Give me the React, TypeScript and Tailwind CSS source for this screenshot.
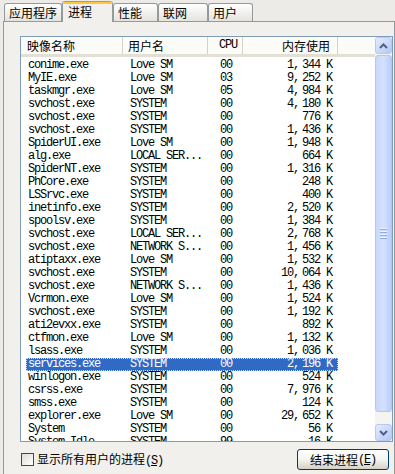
import React from "react";

const ROWS: [string, string, string, string][] = [
  ["conime.exe", "Love SM", "00", "1,344 K"],
  ["MyIE.exe", "Love SM", "03", "9,252 K"],
  ["taskmgr.exe", "Love SM", "05", "4,984 K"],
  ["svchost.exe", "SYSTEM", "00", "4,180 K"],
  ["svchost.exe", "SYSTEM", "00", "776 K"],
  ["svchost.exe", "SYSTEM", "00", "1,436 K"],
  ["SpiderUI.exe", "Love SM", "00", "1,948 K"],
  ["alg.exe", "LOCAL SER...", "00", "664 K"],
  ["SpiderNT.exe", "SYSTEM", "00", "1,316 K"],
  ["PhCore.exe", "SYSTEM", "00", "248 K"],
  ["LSSrvc.exe", "SYSTEM", "00", "400 K"],
  ["inetinfo.exe", "SYSTEM", "00", "2,520 K"],
  ["spoolsv.exe", "SYSTEM", "00", "1,384 K"],
  ["svchost.exe", "LOCAL SER...", "00", "2,768 K"],
  ["svchost.exe", "NETWORK S...", "00", "1,456 K"],
  ["atiptaxx.exe", "Love SM", "00", "1,532 K"],
  ["svchost.exe", "SYSTEM", "00", "10,064 K"],
  ["svchost.exe", "NETWORK S...", "00", "1,436 K"],
  ["Vcrmon.exe", "Love SM", "00", "1,524 K"],
  ["svchost.exe", "SYSTEM", "00", "1,192 K"],
  ["ati2evxx.exe", "SYSTEM", "00", "892 K"],
  ["ctfmon.exe", "Love SM", "00", "1,132 K"],
  ["lsass.exe", "SYSTEM", "00", "1,036 K"],
  ["services.exe", "SYSTEM", "00", "2,196 K"],
  ["winlogon.exe", "SYSTEM", "00", "524 K"],
  ["csrss.exe", "SYSTEM", "00", "7,976 K"],
  ["smss.exe", "SYSTEM", "00", "124 K"],
  ["explorer.exe", "Love SM", "00", "29,652 K"],
  ["System", "SYSTEM", "00", "56 K"],
  ["System Idle...", "SYSTEM", "99", "16 K"],
];

const SELECTED = 23;

// SimSun-like fixed pitch: 6px per latin char
const mono = "font-['Liberation_Mono',monospace] text-[12px] tracking-[-1.2px]";
const cjk = "font-['Noto_Sans_CJK_SC',sans-serif] text-[12px]";

const TABS = [
  { label: "应用程序", w: "w-[58px]" },
  { label: "进程", w: "w-[51px]", active: true },
  { label: "性能", w: "w-[45px]" },
  { label: "联网", w: "w-[50px]" },
  { label: "用户", w: "w-[45px]" },
];

function Mem({ v }: { v: string }) {
  const parts = v.split(",");
  if (parts.length === 1) return <>{v}</>;
  return (
    <>
      {parts[0]}
      <span className="mr-[3px]">,</span>
      {parts[1]}
    </>
  );
}

function Arrow({ up }: { up?: boolean }) {
  return (
    <div className="w-[17px] h-[17px] rounded-[3px] border border-[#b7c9f3] bg-gradient-to-br from-[#e4ecfd] to-[#b5c8f5] flex items-center justify-center">
      <svg width="9" height="6" viewBox="0 0 9 6">
        <polyline
          points={up ? "1,5 4.5,1.5 8,5" : "1,1 4.5,4.5 8,1"}
          fill="none"
          stroke="#4d6185"
          strokeWidth="2"
        />
      </svg>
    </div>
  );
}

export default function App() {
  return (
    <div className="w-[395px] h-[474px] overflow-hidden bg-[#ecebe7] select-none">
      {/* tabs */}
      <div className="flex items-end h-[21px] pl-[4px]">
        {TABS.map((t) =>
          t.active ? (
            <div
              key={t.label}
              className={`${t.w} relative z-10 h-[21px] -mb-px bg-[#f1f0ec] border-x border-[#919b9c] rounded-t-[3px] overflow-hidden`}
            >
              <div className="h-[1px] bg-[#e68b2c]" />
              <div className="h-[2px] bg-[#ffc73c]" />
              <div className={`${cjk} leading-[16px] pl-[5px] text-black`}>{t.label}</div>
            </div>
          ) : (
            <div
              key={t.label}
              className={`${t.w} h-[18px] border-t border-x border-[#919b9c] rounded-t-[3px] bg-gradient-to-b from-[#ffffff] to-[#e4e3de] ${cjk} leading-[17px] pl-[4px] text-black`}
            >
              {t.label}
            </div>
          )
        )}
      </div>

      {/* panel */}
      <div className="ml-[3px] w-[392px] h-[460px] border-t border-x border-[#919b9c] bg-[#f1f0ec] pl-[16px] pt-[14px]">
        {/* list view */}
        <div className="w-[373px] h-[406px] border border-[#7f9db9] bg-white flex">
          <div className="flex-1 flex flex-col overflow-hidden">
            {/* header */}
            <div className="h-[21px] flex border-b-[3px] border-[#e2e0d4] bg-[#fbfbf8] text-black">
              <div className="w-[102px] flex items-center justify-start pl-[6px] border-r border-[#d6d2c2]">
                <span className={`${cjk} leading-[17px]`}>映像名称</span>
              </div>
              <div className="w-[85px] flex items-center pl-[5px] border-r border-[#d6d2c2]">
                <span className={`${cjk} leading-[17px]`}>用户名</span>
              </div>
              <div className="w-[35px] flex items-center pl-[11px] border-r border-[#d6d2c2]">
                <span className={`${mono} leading-[17px]`}>CPU</span>
              </div>
              <div className="w-[95px] flex items-center justify-end pr-[7px] border-r border-[#d6d2c2]">
                <span className={`${cjk} leading-[17px]`}>内存使用</span>
              </div>
              <div className="flex-1" />
            </div>

            {/* rows */}
            <div className={`pt-[2px] ${mono} text-black`}>
              {ROWS.map((r, i) => {
                const sel = i === SELECTED;
                return (
                  <div key={i} className="flex h-[13px] leading-[13px] whitespace-nowrap">
                    <div className="w-[5px]" />
                    <div
                      className={`flex ${
                        sel ? "bg-[#316ac5] text-white outline outline-1 outline-dotted outline-[#c8d8f4] -outline-offset-1" : ""
                      }`}
                    >
                      <div className="w-[97px] pl-[2px]">{r[0]}</div>
                      <div className="w-[85px] pl-[7px]">{r[1]}</div>
                      <div className="w-[35px] pl-[12px]">{r[2]}</div>
                      <div className="w-[95px] pr-[6px] text-right">
                        <Mem v={r[3]} />
                      </div>
                    </div>
                  </div>
                );
              })}
            </div>
          </div>

          {/* scrollbar */}
          <div className="w-[17px] flex flex-col bg-[#f5f4ef]">
            <Arrow up />
            <div className="h-[357px] mt-[1px] rounded-[3px] border border-[#b3c6f5] bg-gradient-to-r from-[#c9d8fc] via-[#d4e0fd] to-[#bccdf8] flex flex-col items-center justify-center gap-[1px]">
              {[0, 1, 2, 3].map((k) => (
                <div key={k} className="w-[7px] h-[2px] border-t border-[#eef4fe] bg-[#8caaf0]" />
              ))}
            </div>
            <div className="flex-1" />
            <Arrow />
          </div>
        </div>

        {/* bottom row */}
        <div className="flex items-center mt-[7px] w-[373px]">
          <div className="ml-[1px] w-[13px] h-[13px] border border-[#1c5180] bg-gradient-to-br from-[#dcdcd7] to-[#ffffff]" />
          <div className={`ml-[3px] ${cjk} leading-[16px] text-black`}>
            显示所有用户的进程
            <span className={mono}>
              (<span className="underline">S</span>)
            </span>
          </div>
          <div className="flex-1" />
          <div className="mr-[4px] w-[92px] h-[21px] rounded-[3px] border border-[#003c74] bg-gradient-to-b from-[#ffffff] via-[#f4f4f0] to-[#d6d0c5] flex items-center justify-center text-black">
            <span className={`${cjk} leading-[16px]`}>结束进程</span>
            <span className={mono}>
              (<span className="underline">E</span>)
            </span>
          </div>
        </div>
      </div>
    </div>
  );
}
